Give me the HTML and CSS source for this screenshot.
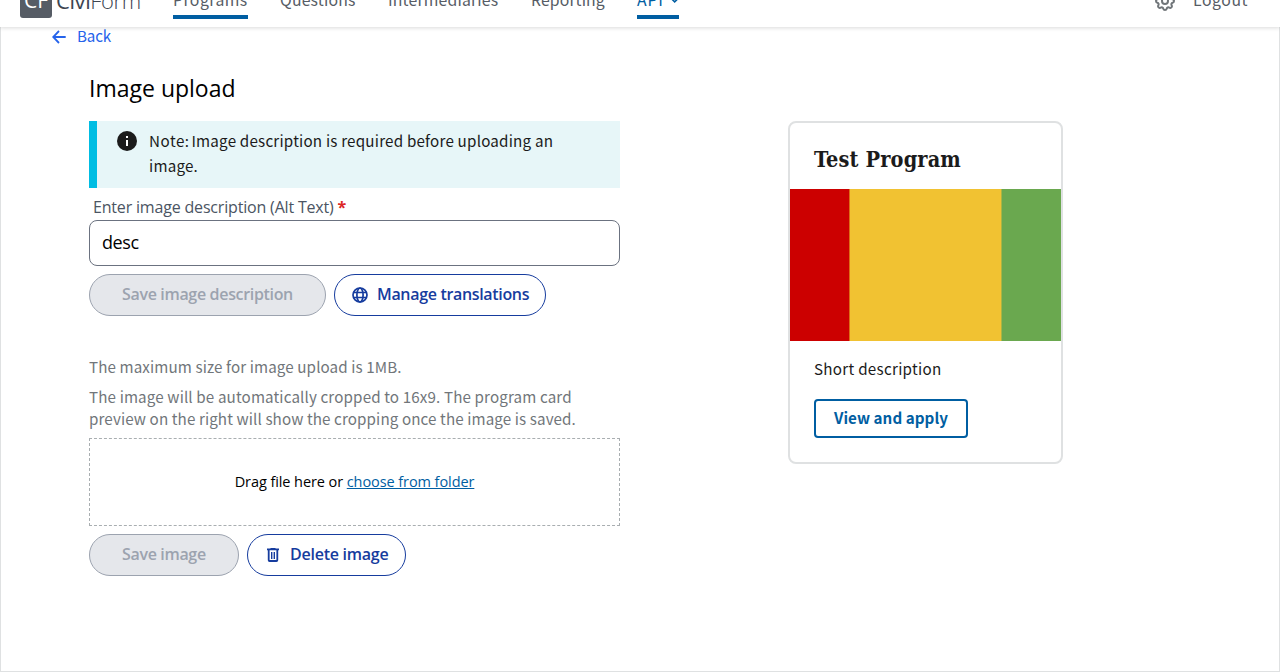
FILE: index.html
```html
<!DOCTYPE html>
<html lang="en">
<head>
<meta charset="utf-8">
<title>Image upload</title>
<link rel="stylesheet" href="styles.css">
</head>
<body>
<header class="header">
  <div class="logo">
    <span class="logo-mark">CF</span>
    <span class="logo-name"><b>Civi</b>Form</span>
  </div>
  <nav class="nav">
    <a class="nav-link current programs">Programs</a>
    <a class="nav-link questions">Questions</a>
    <a class="nav-link intermediaries">Intermediaries</a>
    <a class="nav-link reporting">Reporting</a>
    <a class="nav-link current api">API<svg class="chevron" viewBox="0 0 10 7"><path d="M1 1l4 4 4-4" fill="none" stroke="currentColor" stroke-width="1.7"/></svg></a>
  </nav>
  <div class="account">
    <svg class="gear" viewBox="0 0 24 24" fill="none" stroke="currentColor" stroke-width="2"><path stroke-linejoin="round" d="M10.325 4.317c.426-1.756 2.924-1.756 3.35 0a1.724 1.724 0 002.573 1.066c1.543-.94 3.31.826 2.37 2.37a1.724 1.724 0 001.065 2.572c1.756.426 1.756 2.924 0 3.35a1.724 1.724 0 00-1.066 2.573c.94 1.543-.826 3.31-2.37 2.37a1.724 1.724 0 00-2.572 1.065c-.426 1.756-2.924 1.756-3.35 0a1.724 1.724 0 00-2.573-1.066c-1.543.94-3.31-.826-2.37-2.37a1.724 1.724 0 00-1.065-2.572c-1.756-.426-1.756-2.924 0-3.35a1.724 1.724 0 001.066-2.573c-.94-1.543.826-3.31 2.37-2.37.996.608 2.296.07 2.572-1.065z"/><circle cx="12" cy="12" r="3"/></svg>
    <a class="logout">Logout</a>
  </div>
</header>
<main class="page">
  <a class="back"><svg class="back-icon" viewBox="0 0 14 14"><path d="M13.7 7H1.2M7 1L1.2 7 7 13" fill="none" stroke="currentColor" stroke-width="1.8"/></svg><span class="back-text">Back</span></a>
  <div class="columns">
    <section class="form">
      <h1 class="title">Image upload</h1>
      <div class="alert">
        <svg class="alert-icon" viewBox="0 0 20 20"><circle cx="10" cy="10" r="10" fill="#1b1b1b"/><path d="M9 5h2v2H9zM9 9h2v6H9z" fill="#fff"/></svg>
        <p class="alert-text"><span class="tight">Note: </span>Image description is required before uploading an<br>image.</p>
      </div>
      <label class="label" for="desc">Enter image description (Alt Text) <b class="required">*</b></label>
      <input class="input" id="desc" value="desc">
      <div class="buttons">
        <button class="btn disabled save-desc">Save image description</button>
        <button class="btn manage"><svg class="icon-globe" viewBox="0 0 16 16" fill="none" stroke="currentColor" stroke-width="1.7"><circle cx="8" cy="8" r="7"/><ellipse cx="8" cy="8" rx="3.1" ry="7"/><path d="M1.4 5.5h13.2M1.4 10.5h13.2"/></svg>Manage translations</button>
      </div>
      <p class="hint size">The maximum size for image upload is 1MB.</p>
      <p class="hint crop"><span class="first">The image will be automatically cropped to 16x9. The program card</span><br>preview on the right will show the cropping once the image is saved.</p>
      <div class="drop"><span>Drag file here or <a class="choose">choose from folder</a></span></div>
      <div class="buttons">
        <button class="btn disabled save-img">Save image</button>
        <button class="btn delete"><svg class="icon-trash" viewBox="0 0 12 14" fill="none" stroke="currentColor" stroke-width="1.8"><path d="M0 1.3h12M3.5.7h5M1.7 2v10.2q0 .8.8.8h7q.8 0 .8-.8V2"/><path stroke-width="1.4" d="M4.7 4v7M7.3 4v7"/></svg>Delete image</button>
      </div>
    </section>
    <article class="card">
      <h2 class="card-title">Test Program</h2>
      <div class="flag"><i class="red"></i><i class="yellow"></i><i class="green"></i></div>
      <p class="card-text">Short description</p>
      <a class="apply">View and apply</a>
    </article>
  </div>
</main>
</body>
</html>
```
FILE: styles.css
```css
* { box-sizing: border-box; }
body { margin: 0; height: 672px; overflow: hidden; display: flex; flex-direction: column; background: #fff; color: #1b1b1b; font-family: "Noto Sans CJK SC", sans-serif; font-size: 15.2px; }
h1, h2, p { margin: 0; }

/* Header, scrolled partly out of view */
.header { flex: none; height: 27px; overflow: hidden; display: flex; align-items: flex-end; padding: 0 32px 0 20px; box-shadow: 0 1px 4px rgba(0,0,0,.15); color: #565c65; position: relative; }
.logo { display: flex; align-items: flex-end; width: 153px; height: 40px; gap: 4px; }
.logo-mark { width: 32px; height: 32px; margin-bottom: 9px; border-radius: 3px; background: #565c65; color: #fff; text-align: center; font: 21px/29px "Open Sans", sans-serif; }
.logo-name { font: 300 22px/32px "Open Sans", sans-serif; letter-spacing: -.4px; margin-bottom: 11px; color: #3d4551; }
.logo-name b { font-weight: 400; }
.nav { display: flex; gap: 32px; height: 100%; align-items: flex-end; }
.nav-link { height: 32px; margin-bottom: 8px; line-height: 26px; white-space: nowrap; display: flex; font-size: 15.8px; letter-spacing: .17px; }
.current { border-bottom: 4px solid #005ea2; }
.programs { width: 75px; letter-spacing: .45px; }
.questions { width: 76px; }
.intermediaries { width: 111px; }
.reporting { width: 74px; letter-spacing: .1px; }
.api { width: 42px; color: #005ea2; letter-spacing: .8px; }
.chevron { width: 10px; height: 7px; margin: 10px 0 0 6px; }
.account { margin-left: auto; display: flex; align-items: flex-end; gap: 16px; }
.gear { width: 24px; height: 24px; margin-bottom: 14px; color: #71767a; }
.logout { width: 55px; height: 32px; line-height: 26px; margin-bottom: 8px; font-size: 15.8px; letter-spacing: .55px; }

.page { flex: 1; border: 1px solid #dfe1e2; border-top: 0; }
.back { display: flex; align-items: center; gap: 11px; height: 20px; padding-left: 51px; color: #2563eb; }
.back-text { padding-bottom: 4px; letter-spacing: -.15px; }
.back-icon { width: 14px; height: 14px; }
.columns { display: flex; padding-left: 88px; align-items: flex-start; }

/* Upload form */
.form { width: 531px; padding-top: 23px; display: flex; flex-direction: column; font-family: "Open Sans", sans-serif; }
.title { font: 400 23px/36px "Open Sans", sans-serif; color: #000; height: 51px; }
.alert { height: 67px; border-left: 8px solid #00bde3; background: #e7f6f8; padding: 7px 20px; display: flex; gap: 12px; }
.alert-icon { width: 20px; height: 20px; margin-top: 3px; }
.alert-text { font: 15.2px/25px "Noto Sans CJK SC", sans-serif; letter-spacing: .2px; }
.tight { letter-spacing: .5px; word-spacing: -2px; }
.label { font-size: 16px; line-height: 24px; letter-spacing: -.18px; color: #4b5563; padding-left: 4px; margin-top: 7px; height: 25px; }
.required { color: #dc2626; }
.input { height: 46px; border: 1px solid #6b7280; border-radius: 8px; padding: 0 12px 2px; font: 18px "Open Sans", sans-serif; letter-spacing: -.4px; color: #000; }
.buttons { display: flex; gap: 8px; margin-top: 8px; }
.btn { height: 42px; border: 1px solid #163c9e; border-radius: 21px; background: #fff; color: #163c9e; font: 600 16px/24px "Open Sans", sans-serif; letter-spacing: -.33px; white-space: nowrap; display: flex; align-items: center; padding: 0 0 2px; }
.disabled { background: #e5e7eb; color: #9ca3af; border-color: #9ca3af; padding-left: 32px; }
.save-desc { width: 237px; }
.manage { width: 212px; padding-left: 17px; gap: 9px; }
.save-img { width: 150px; }
.delete { width: 159px; padding-left: 19px; gap: 11px; letter-spacing: -.25px; }
.icon-globe { width: 16px; height: 16px; margin-top: 2px; }
.icon-trash { width: 12px; height: 14px; margin-top: 2px; }
.hint { font: 15.2px/22px "Noto Sans CJK SC", sans-serif; letter-spacing: .1px; color: #71767a; white-space: nowrap; }
.first { letter-spacing: .125px; }
.size { margin-top: 39px; }
.crop { margin: 8px 0 9px; }
.drop { height: 88px; border: 1px dashed #a9aeb1; display: flex; align-items: center; justify-content: center; padding-bottom: 2px; font-size: 14.5px; letter-spacing: -.08px; color: #000; }
.choose { color: #005ea2; text-decoration: underline; }

/* Program card preview */
.card { width: 275px; height: 343px; margin: 74px 0 0 168px; border: 2px solid #dfe1e2; border-radius: 8px; }
.card-title { height: 66px; padding: 21px 0 0 24px; font: 700 21.5px/32px "DejaVu Serif Condensed", "DejaVu Serif", serif; letter-spacing: .15px; }
.flag { display: flex; height: 152px; }
.red { width: 60px; background: #c00; border-right: 1px solid #dd6d16; }
.yellow { flex: 1; background: #f1c232; }
.green { width: 60px; background: #6aa84f; border-left: 1px solid #a9b443; }
.card-text { line-height: 24px; padding: 15px 0 0 24px; letter-spacing: .28px; }
.apply { display: flex; width: 154px; height: 39px; margin: 19px 0 0 24px; padding: 0 0 3px 18px; align-items: center; border: 2px solid #005ea2; border-radius: 4px; color: #005ea2; font-weight: 700; letter-spacing: .05px; }
```
